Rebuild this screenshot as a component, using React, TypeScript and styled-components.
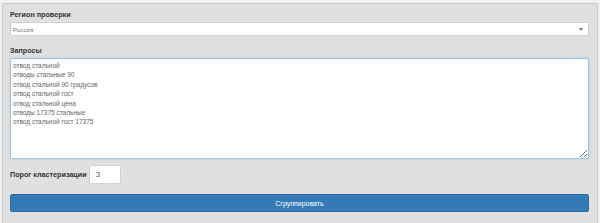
import React from "react";
import styled, { createGlobalStyle } from "styled-components";

const Global = createGlobalStyle`
  html, body { margin: 0; padding: 0; background: #efefef; }
  body { font-family: "Liberation Sans", Arial, sans-serif; }
  * { box-sizing: border-box; }
`;

const Panel = styled.form`
  margin: 3px 2px 0 2px;
  background: #e0e0e0;
  border: 1px solid #cbcbcb;
  border-bottom: none;
  border-radius: 2px 2px 0 0;
  padding: 6px 8px 11px 7px;
  display: flex;
  flex-direction: column;
`;

const Label = styled.label`
  display: block;
  font-size: 7.2px;
  line-height: 9px;
  font-weight: bold;
  color: #333;
  margin-bottom: 3px;
`;

const Group = styled.div<{ $gap?: number }>`
  display: flex;
  flex-direction: column;
  margin-bottom: ${(p) => p.$gap ?? 0}px;
`;

const SelectBox = styled.div`
  position: relative;
  height: 14px;
  background: #fff;
  border: 1px solid #c9d3d8;
  border-radius: 2px;
  font-size: 6.2px;
  color: #777;
  display: flex;
  align-items: center;
  padding-left: 2px;
`;

const Caret = styled.span`
  position: absolute;
  right: 5px;
  top: 5px;
  width: 0;
  height: 0;
  border-left: 2px solid transparent;
  border-right: 2px solid transparent;
  border-top: 3px solid #777;
`;

const Area = styled.textarea`
  height: 101px;
  resize: vertical;
  background: #fff;
  border: 1px solid #9ec5df;
  border-radius: 2px;
  box-shadow: 0 0 2px rgba(102, 175, 233, 0.5);
  font-family: "Liberation Sans", Arial, sans-serif;
  font-size: 6.5px;
  line-height: 9.4px;
  color: #666;
  padding: 2px 2px;
  outline: none;
`;

const Row = styled.div`
  display: flex;
  align-items: center;
  gap: 2px;
  margin-top: 6px;
  margin-bottom: 10px;
`;

const InlineLabel = styled(Label)`
  margin-bottom: 0;
`;

const NumInput = styled.input`
  width: 32px;
  height: 19px;
  background: #fff;
  border: 1px solid #c9d3d8;
  border-radius: 2px;
  font-family: "Liberation Sans", Arial, sans-serif;
  font-size: 8px;
  color: #555;
  padding: 0 6px;
  outline: none;
`;

const Button = styled.button`
  height: 18px;
  width: 100%;
  background: #337ab7;
  border: 1px solid #2e6da4;
  border-radius: 2px;
  color: #fff;
  font-family: "Liberation Sans", Arial, sans-serif;
  font-size: 7px;
  padding: 0;
`;

const text = [
  "отвод стальной",
  "отводы стальные 90",
  "отвод стальной 90 градусов",
  "отвод стальной гост",
  "отвод стальной цена",
  "отводы 17375 стальные",
  "отвод стальной гост 17375",
].join("\n");

export default function App() {
  return (
    <>
      <Global />
      <Panel onSubmit={(e) => e.preventDefault()}>
        <Group $gap={10}>
          <Label>Регион проверки</Label>
          <SelectBox>
            Россия
            <Caret />
          </SelectBox>
        </Group>
        <Group>
          <Label>Запросы</Label>
          <Area defaultValue={text} spellCheck={false} />
        </Group>
        <Row>
          <InlineLabel>Порог кластеризации</InlineLabel>
          <NumInput defaultValue="3" />
        </Row>
        <Button type="submit">Сгруппировать</Button>
      </Panel>
    </>
  );
}
